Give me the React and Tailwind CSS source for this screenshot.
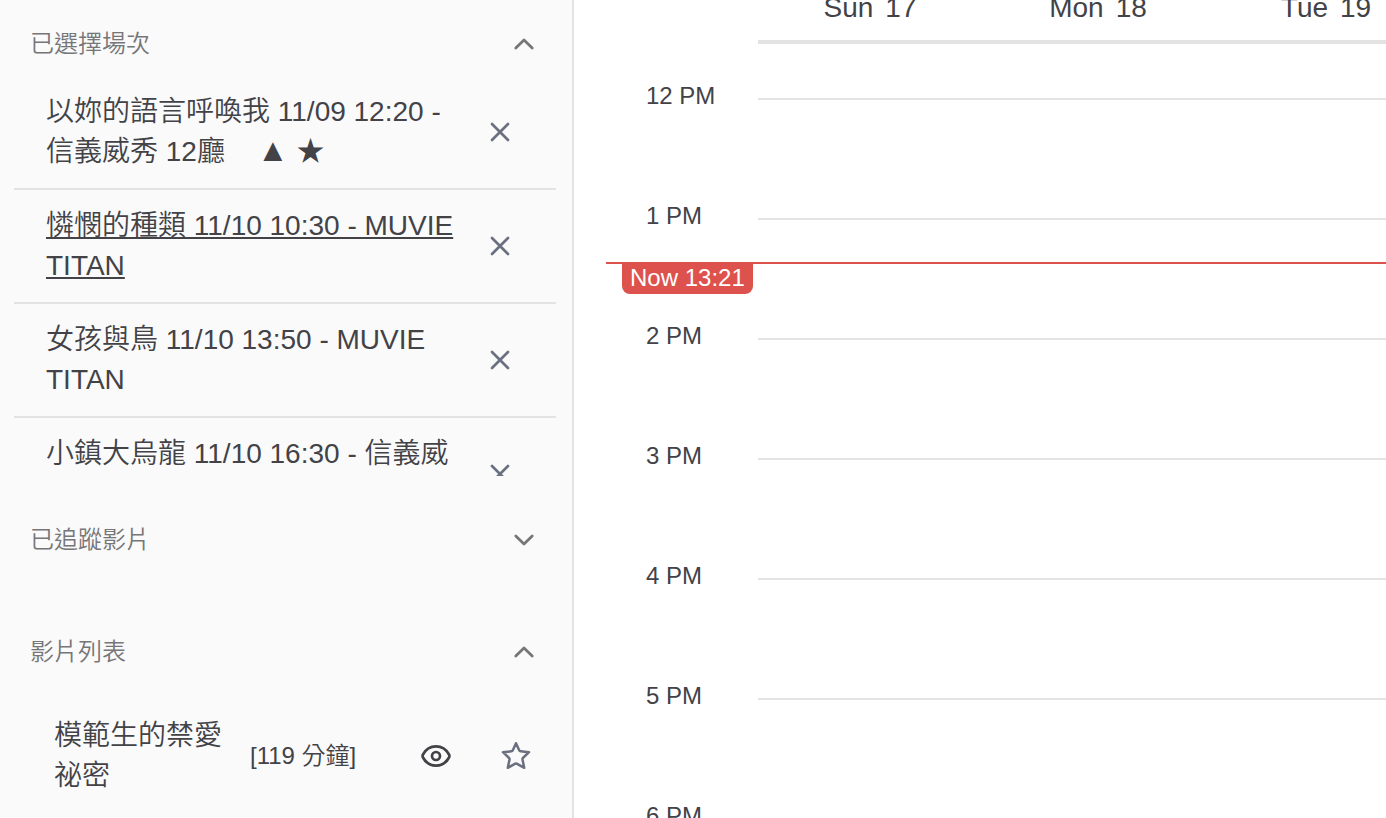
import React, { useState } from "react";

const screenings = [
  { id: 1, title: "以妳的語言呼喚我 11/09 12:20 - 信義威秀 12廳", marked: true },
  { id: 2, title: "憐憫的種類 11/10 10:30 - MUVIE TITAN", active: true },
  { id: 3, title: "女孩與鳥 11/10 13:50 - MUVIE TITAN" },
  { id: 4, title: "小鎮大烏龍 11/10 16:30 - 信義威秀 12廳" },
];

const days = ["Sun 17", "Mon 18", "Tue 19", "Wed 20"];
const hours = ["12 PM", "1 PM", "2 PM", "3 PM", "4 PM", "5 PM", "6 PM"];

function Chevron({ open }) {
  return (
    <svg className="size-8" viewBox="0 0 32 32" fill="none" stroke="currentColor" strokeWidth="2.8" strokeLinecap="round" strokeLinejoin="round" aria-hidden="true">
      <path d={open ? "M7.800 20 16 12l8.200 8" : "M7.800 12 16 20l8.200-8"} />
    </svg>
  );
}

function CloseIcon() {
  return (
    <svg className="size-8" viewBox="0 0 32 32" fill="none" stroke="currentColor" strokeWidth="2.700" strokeLinecap="round" aria-hidden="true">
      <path d="M8 8l16 16M24 8 8 24" />
    </svg>
  );
}

function EyeIcon() {
  return (
    <svg className="size-8" viewBox="0 0 32 32" fill="none" stroke="currentColor" strokeWidth="2.700" strokeLinejoin="round" aria-hidden="true">
      <path d="M3 14.500C5.700 9.500 10.500 6.400 16 6.400S26.300 9.500 29 14.500a3 3 0 0 1 0 3C26.300 22.500 21.500 25.600 16 25.600S5.700 22.500 3 17.500a3 3 0 0 1 0-3Z" />
      <circle cx="16" cy="16" r="4" />
    </svg>
  );
}

function StarIcon() {
  return (
    <svg className="size-8" viewBox="0 0 32 32" fill="none" stroke="currentColor" strokeWidth="2.500" strokeLinejoin="round" aria-hidden="true">
      <path d="M16 3.200 19.300 10.400Q19.700 11.200 20.600 11.300L29 12.200 22.900 18Q22.300 18.600 22.500 19.500L24.200 27.800 16.700 23.700Q16 23.400 15.300 23.700L7.800 27.800 9.500 19.500Q9.700 18.600 9.100 18L3 12.200 11.400 11.300Q12.300 11.200 12.700 10.400Z" />
    </svg>
  );
}

function Section({ title, defaultOpen = false, children }) {
  const [open, setOpen] = useState(defaultOpen);
  return (
    <section className={open ? "" : "pb-4"}>
      <h2>
        <button
          type="button"
          aria-expanded={open}
          onClick={() => setOpen(!open)}
          className="flex h-16 w-full items-center justify-between pr-4 pl-4 text-2xl text-[#767679]"
        >
          <span>{title}</span>
          <Chevron open={open} />
        </button>
      </h2>
      {open && children}
    </section>
  );
}

function Sidebar() {
  return (
    <aside className="flex w-[574px] shrink-0 flex-col gap-8 border-r-2 border-[#e3e3e4] bg-[#fafafa] pt-3 pr-4 pl-3.5">
      <Section title="已選擇場次" defaultOpen>
        <ul className="max-h-[400px] overflow-hidden">
          {screenings.map((s) => (
            <li key={s.id} className="flex items-center gap-4 border-b-2 border-[#e3e3e4] py-4 pr-8 pl-8">
              <p className={s.active ? "flex-1 text-[28px] leading-10 underline" : "flex-1 text-[28px] leading-10"}>
                {s.title}
                {s.marked && (
                  <span className="ml-8 whitespace-nowrap">
                    <span className="text-[32px] leading-none">▲</span> ★
                  </span>
                )}
              </p>
              <button type="button" aria-label="移除場次" className="flex w-12 shrink-0 justify-center text-[#6b7080]">
                <CloseIcon />
              </button>
            </li>
          ))}
        </ul>
      </Section>
      <Section title="已追蹤影片" />
      <Section title="影片列表" defaultOpen>
        <ul>
          <li className="flex items-center py-8 pr-6 pl-10">
            <p className="w-[168px] text-[28px] leading-10">模範生的禁愛祕密</p>
            <span className="ml-7 flex-1 text-2xl">[119 分鐘]</span>
            <div className="flex items-center gap-12">
              <button type="button" aria-label="檢視影片">
                <EyeIcon />
              </button>
              <button type="button" aria-label="追蹤影片" className="text-[#6b7080]">
                <StarIcon />
              </button>
            </div>
          </li>
        </ul>
      </Section>
    </aside>
  );
}

function Calendar() {
  return (
    <main className="min-w-0 flex-1 overflow-hidden pl-8">
      <header className="ml-[152px] flex h-11 items-end overflow-hidden border-b-4 border-[#e3e3e4]">
        {days.map((d) => {
          const [name, date] = d.split(" ");
          return (
            <div key={d} className="flex w-[228px] shrink-0 justify-center gap-3 pr-1 pb-3 text-[28px] leading-10">
              <span>{name}</span>
              <span>{date}</span>
            </div>
          );
        })}
      </header>
      <div className="relative pt-9">
        {hours.map((h) => (
          <div key={h} className="flex h-[120px] items-start">
            <span className="w-[152px] shrink-0 pl-10 text-2xl leading-8">{h}</span>
            <div className="mt-[18px] flex-1 border-t-2 border-[#e3e3e4]" />
          </div>
        ))}
        <div className="absolute inset-x-0 top-[218px] border-t-2 border-[#dd524c]">
          <span className="absolute -top-0.5 left-4 rounded-b-lg bg-[#dd524c] px-2 text-2xl leading-8 whitespace-nowrap text-white">
            Now 13:21
          </span>
        </div>
      </div>
    </main>
  );
}

export default function App() {
  return (
    <div
      lang="zh-TW"
      className="flex h-screen overflow-hidden bg-white font-['Liberation_Sans','Noto_Sans_CJK_TC',sans-serif] font-[350] text-[#424247]"
    >
      <Sidebar />
      <Calendar />
    </div>
  );
}
